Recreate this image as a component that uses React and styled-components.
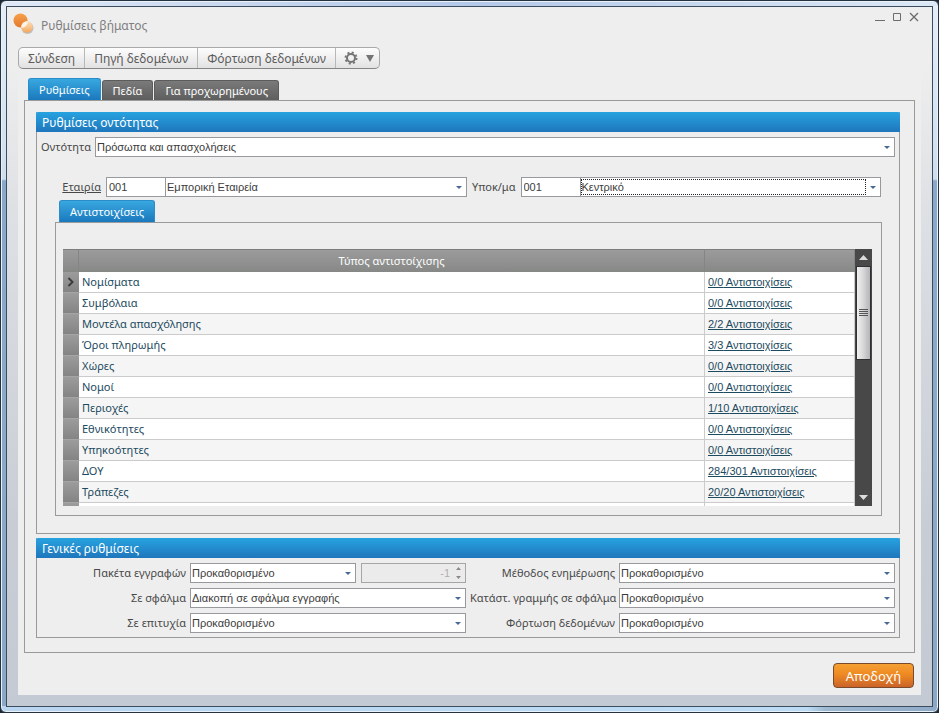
import React, { useState } from 'react';
import styled, { createGlobalStyle } from 'styled-components';

const GlobalStyle = createGlobalStyle`
    * {
        box-sizing: border-box;
    }
    body {
        margin: 0;
        background: #1c2836;
        font-family: "Noto Sans", "Open Sans", sans-serif;
        font-size: 11px;
        color: #484848;
    }
    button, input, select {
        font-family: inherit;
        color: inherit;
        margin: 0;
    }
`;

const fieldFont = '"Liberation Sans", Arial, sans-serif';

// Window frame
const Frame = styled.div`
    display: flex;
    min-height: 100vh;
    padding: 5px;
    border: 1px solid #26323f;
    border-radius: 6px;
    background:
        linear-gradient(90deg, #b9d5f0 0, #bcdcf5 86%, #9fb9d2 88%, #8fabc8 100%) bottom / 100% 6px no-repeat,
        linear-gradient(90deg, #dfe8f6, #b4c8e8 50%, #dce8f5) top / 100% 5px no-repeat,
        linear-gradient(#e4eef8 0, #cfdeee 178px, #8aa9ca 180px, #8ba8c6 100%);
    box-shadow: inset 0 0 0 1px #e8f2fa;
`;

const Window = styled.div`
    flex: 1;
    display: flex;
    flex-direction: column;
    padding: 0 11px 11px;
    border: 1px solid #3c4d60;
    background: linear-gradient(#eeeeee 60px, #dcdfe3 220px, #c8cdd5 520px, #c4cad3 100%);
`;

const TitleBar = styled.header`
    display: flex;
    align-items: flex-start;
    height: 40px;
    margin: 0 -2px 0 -5px;
`;

const Logo = styled.svg`
    margin-top: 6px;
    flex: none;
`;

const Title = styled.h1`
    flex: 1;
    margin: 8px 0 0 6px;
    font-size: 12px;
    line-height: 22px;
    font-weight: normal;
    color: #7e7e7e;
`;

const WindowButton = styled.button`
    display: flex;
    width: 17px;
    height: 20px;
    padding: 4px 3px;
    border: none;
    background: none;
`;

const Body = styled.main`
    flex: 1;
    padding: 0 6px 6px;
    background: #eeeeee;
`;

const Toolbar = styled.div`
    display: inline-flex;
    margin-left: -6px;
    border: 1px solid #a9a9a9;
    border-bottom-color: #858585;
    border-radius: 5px;
    background: linear-gradient(#fdfdfd, #e2e2e2);
    overflow: hidden;
`;

const ToolButton = styled.button`
    display: flex;
    align-items: center;
    gap: 8px;
    height: 20px;
    padding: 0 9px;
    border: none;
    background: none;
    font-size: 12px;
    white-space: nowrap;
    color: #5c5c5c;
    & + & {
        border-left: 1px solid #b8b8b8;
    }
    &:last-child {
        padding: 0 5px 0 8px;
    }
`;

const Tabs = styled.div`
    display: flex;
    align-items: flex-end;
    gap: 1px;
    padding-left: 4px;
`;

const MainTabs = styled(Tabs)`
    margin-top: 9px;
`;

const Tab = styled.button`
    height: ${(p) => (p.$active ? 22 : 20)}px;
    padding: 0 10px;
    border: 1px solid ${(p) => (p.$active ? '#2a8cc9' : '#5c5c5c')};
    border-bottom: none;
    border-radius: 3px 3px 0 0;
    background: ${(p) => (p.$active ? 'linear-gradient(#38a8e0, #1a78bd)' : 'linear-gradient(#7a7a7a, #5e5e5e)')};
    font-size: 11px;
    line-height: 20px;
    white-space: nowrap;
    color: #ffffff;
`;

const TabPanel = styled.div`
    padding: 11px 14px 14px 11px;
    border: 1px solid #9a9a9a;
`;

const Group = styled.section`
    border: 1px solid #9a9a9a;
    border-top: none;
    & + & {
        margin-top: 4px;
    }
`;

const GroupTitle = styled.h2`
    margin: 0 -1px;
    padding: 2px 6px 0;
    border-radius: 2px 2px 0 0;
    background: linear-gradient(#27a3e0, #1f76bc);
    font-size: 12px;
    line-height: 18px;
    font-weight: normal;
    color: #ffffff;
`;

const EntityRow = styled.div`
    display: grid;
    grid-template-columns: 50px 1fr;
    gap: 4px;
    padding: 5px 4px 0;
`;

const CompanyRow = styled.div`
    display: grid;
    grid-template-columns: 60px 1fr 44px 1fr;
    gap: 5px;
    padding: 20px 18px 0 4px;
`;

const SettingsGrid = styled.div`
    display: grid;
    grid-template-columns: 145px 1fr 145px 1fr;
    gap: 5px 4px;
    padding: 5px 4px 4px;
`;

const Label = styled.label`
    line-height: 20px;
    text-align: right;
    white-space: nowrap;
    text-decoration: ${(p) => (p.$link ? 'underline' : 'none')};
`;

const Pair = styled.div`
    display: grid;
    grid-template-columns: ${(p) => p.$columns};
    gap: ${(p) => p.$gap || 0}px;
`;

const TextBox = styled.input`
    width: 100%;
    height: 20px;
    padding: 0 2px;
    border: 1px solid #98999c;
    border-right: none;
    background: #ffffff;
    font-family: ${fieldFont};
    font-size: 11px;
    color: #3c3c3c;
`;

const SelectBox = styled.div`
    display: grid;
    grid-template-columns: 1fr 14px;
    align-items: center;
    height: 20px;
    border: 1px solid #98999c;
    background: #ffffff;
`;

const Select = styled.select`
    grid-area: 1 / 1 / 2 / 3;
    height: 18px;
    width: 100%;
    padding: 0 14px 0 1px;
    border: none;
    outline: none;
    appearance: none;
    background: none;
    font-family: ${fieldFont};
    font-size: 11px;
    color: #3c3c3c;
`;

const FocusMark = styled.span`
    grid-area: 1 / 1 / 2 / 2;
    height: 16px;
    border: 1px dotted #222222;
    pointer-events: none;
`;

const ArrowIcon = styled.svg`
    grid-area: 1 / 2 / 2 / 3;
    justify-self: center;
    pointer-events: none;
`;

const Spinner = styled.div`
    display: flex;
    align-items: center;
    height: 20px;
    padding-right: 4px;
    border: 1px solid #a6a6a6;
    background: #ebebeb;
`;

const SpinnerInput = styled.input`
    flex: 1;
    min-width: 0;
    padding: 0 6px 0 0;
    border: none;
    background: none;
    font-family: ${fieldFont};
    font-size: 11px;
    text-align: right;
    color: #b0b0b0;
`;

const MappingArea = styled.div`
    padding: 3px 17px 17px 18px;
`;

const MappingPanel = styled.div`
    display: flex;
    padding: 26px 9px 9px 7px;
    border: 1px solid #9a9a9a;
`;

const GridView = styled.div`
    flex: 1;
    height: 257px;
    overflow: hidden;
    background: #ffffff;
`;

const Table = styled.table`
    width: 100%;
    border-collapse: separate;
    border-spacing: 0;
    table-layout: fixed;
`;

const HeadCell = styled.th`
    width: ${(p) => p.$width || 'auto'};
    height: 23px;
    padding: 0 0 2px;
    border-top: 1px solid #7d7d7d;
    border-right: 1px solid #858585;
    background: linear-gradient(#9b9b9b, #868886);
    font-weight: normal;
    color: #ffffff;
`;

const MarkerCell = styled.td`
    height: 21px;
    padding: 0 4px;
    border-bottom: 1px solid #a5a5a5;
    background: linear-gradient(#9c9c9c, #848484);
    line-height: 0;
`;

const Row = styled.tr`
    background: ${(p) => (p.$shaded ? '#f5f5f5' : '#ffffff')};
`;

const Cell = styled.td`
    height: 21px;
    padding: 0 3px;
    border-right: 1px solid #cbcbcb;
    border-bottom: 1px solid #cbcbcb;
    line-height: 18px;
    white-space: nowrap;
    color: #1c4a5e;
`;

const MappingLink = styled.a`
    font-family: ${fieldFont};
    font-size: 11px;
    color: #1c4a5e;
`;

const ScrollBar = styled.div`
    display: flex;
    flex-direction: column;
    width: 17px;
    padding: 0 1px;
    background: #484848;
`;

const ScrollButton = styled.button`
    display: flex;
    align-items: center;
    justify-content: center;
    height: 17px;
    padding: 0;
    border: none;
    background: none;
`;

const ScrollTrack = styled.div`
    flex: 1;
`;

const ScrollThumb = styled.div`
    display: flex;
    align-items: center;
    justify-content: center;
    height: 94px;
    border: 1px solid #303030;
    background: linear-gradient(90deg, #f0f0f0, #d6d6d8 50%, #b4b4ba);
`;

const Footer = styled.footer`
    display: flex;
    justify-content: flex-end;
    padding: 10px 1px 0;
`;

const AcceptButton = styled.button`
    width: 81px;
    height: 25px;
    padding: 0;
    border: 1px solid #7a4a2c;
    border-radius: 4px;
    background: linear-gradient(#f5a032, #ee8a22 45%, #cb632a);
    font-size: 13px;
    color: #ffffff;
`;

const mappings = [
    ['Νομίσματα', '0/0'],
    ['Συμβόλαια', '0/0'],
    ['Μοντέλα απασχόλησης', '2/2'],
    ['Όροι πληρωμής', '3/3'],
    ['Χώρες', '0/0'],
    ['Νομοί', '0/0'],
    ['Περιοχές', '1/10'],
    ['Εθνικότητες', '0/0'],
    ['Υπηκοότητες', '0/0'],
    ['ΔΟΥ', '284/301'],
    ['Τράπεζες', '20/20'],
];

const ComboBox = ({ id, value, focused, ...rest }) => (
    <SelectBox>
        <Select id={id} defaultValue={value} {...rest}>
            <option>{value}</option>
        </Select>
        {focused && <FocusMark />}
        <ArrowIcon width="6" height="3" viewBox="0 0 6 3">
            <path d="M0 0h6L3 3z" fill="#49689a" />
        </ArrowIcon>
    </SelectBox>
);

const GearIcon = () => (
    <svg width="14" height="14" viewBox="0 0 14 14" fill="none" stroke="#747474">
        <circle cx="7" cy="7" r="4" strokeWidth="2" />
        <circle cx="7" cy="7" r="5.6" strokeWidth="1.8" strokeDasharray="2.1 2.298" />
    </svg>
);

const App = () => {
    const [tab, setTab] = useState('Ρυθμίσεις');

    return (
        <Frame>
            <GlobalStyle />
            <Window>
                <TitleBar>
                    <Logo width="22" height="22" viewBox="0 0 22 22">
                        <defs>
                            <linearGradient id="orange" x1="0" y1="0" x2="0" y2="1">
                                <stop offset="0" stopColor="#f6a04c" />
                                <stop offset="1" stopColor="#e37a2c" />
                            </linearGradient>
                            <linearGradient id="pale" x1="0" y1="0" x2="0" y2="1">
                                <stop offset="0" stopColor="#fbdcb4" />
                                <stop offset="0.5" stopColor="#f8c690" />
                                <stop offset="1" stopColor="#f3a65a" />
                            </linearGradient>
                        </defs>
                        <circle cx="14.5" cy="15" r="6" fill="#8d8d8d" opacity="0.5" />
                        <circle cx="7.500" cy="7.500" r="7" fill="url(#orange)" />
                        <circle cx="14" cy="14" r="5.8" fill="url(#pale)" />
                        <path d="M8.3 15C8 10.500 11 8.200 14.900 8.300 14.700 12 12 14.700 8.300 15z" fill="#fdf3e6" />
                    </Logo>
                    <Title>Ρυθμίσεις βήματος</Title>
                    <WindowButton aria-label="Ελαχιστοποίηση">
                        <svg width="11" height="11" stroke="#6c6c6c"><path d="M0 9.500h10" /></svg>
                    </WindowButton>
                    <WindowButton aria-label="Μεγιστοποίηση">
                        <svg width="11" height="11" stroke="#6c6c6c" fill="none"><path d="M1.500 2.500h7v7h-7z" /></svg>
                    </WindowButton>
                    <WindowButton aria-label="Κλείσιμο">
                        <svg width="11" height="11" stroke="#6c6c6c" strokeWidth="1.300"><path d="M1 2l8 8M9 2l-8 8" /></svg>
                    </WindowButton>
                </TitleBar>
                <Body>
                    <Toolbar>
                        <ToolButton>Σύνδεση</ToolButton>
                        <ToolButton>Πηγή δεδομένων</ToolButton>
                        <ToolButton>Φόρτωση δεδομένων</ToolButton>
                        <ToolButton aria-label="Επιλογές">
                            <GearIcon />
                            <svg width="8" height="7"><path d="M0 0h8L4 7z" fill="#747474" /></svg>
                        </ToolButton>
                    </Toolbar>
                    <MainTabs>
                        {['Ρυθμίσεις', 'Πεδία', 'Για προχωρημένους'].map((name) => (
                            <Tab key={name} $active={name === tab} onClick={() => setTab(name)}>
                                {name}
                            </Tab>
                        ))}
                    </MainTabs>
                    <TabPanel>
                        <Group>
                            <GroupTitle>Ρυθμίσεις οντότητας</GroupTitle>
                            <EntityRow>
                                <Label htmlFor="entity">Οντότητα</Label>
                                <ComboBox id="entity" value="Πρόσωπα και απασχολήσεις" />
                            </EntityRow>
                            <CompanyRow>
                                <Label htmlFor="company" $link>Εταιρία</Label>
                                <Pair $columns="59px 1fr">
                                    <TextBox id="company" defaultValue="001" />
                                    <ComboBox aria-label="Εταιρία" value="Εμπορική Εταιρεία" />
                                </Pair>
                                <Label htmlFor="branch">Υποκ/μα</Label>
                                <Pair $columns="59px 1fr">
                                    <TextBox id="branch" defaultValue="001" />
                                    <ComboBox aria-label="Υποκ/μα" value="Κεντρικό" focused />
                                </Pair>
                            </CompanyRow>
                            <MappingArea>
                                <Tabs>
                                    <Tab $active>Αντιστοιχίσεις</Tab>
                                </Tabs>
                                <MappingPanel>
                                    <GridView>
                                        <Table>
                                            <thead>
                                                <tr>
                                                    <HeadCell $width="16px" />
                                                    <HeadCell>Τύπος αντιστοίχισης</HeadCell>
                                                    <HeadCell $width="150px" />
                                                </tr>
                                            </thead>
                                            <tbody>
                                                {mappings.map(([name, count], i) => (
                                                    <Row key={name} $shaded={i % 2 === 0 && i > 0}>
                                                        <MarkerCell>
                                                            {i === 0 && (
                                                                <svg width="8" height="10" fill="none" stroke="#3c3c3c" strokeWidth="2">
                                                                    <path d="M1.500 1l4 4-4 4" />
                                                                </svg>
                                                            )}
                                                        </MarkerCell>
                                                        <Cell>{name}</Cell>
                                                        <Cell>
                                                            <MappingLink href="#">{count} Αντιστοιχίσεις</MappingLink>
                                                        </Cell>
                                                    </Row>
                                                ))}
                                                <Row>
                                                    <MarkerCell />
                                                    <Cell />
                                                    <Cell />
                                                </Row>
                                            </tbody>
                                        </Table>
                                    </GridView>
                                    <ScrollBar>
                                        <ScrollButton aria-label="Πάνω">
                                            <svg width="9" height="5"><path d="M0 5h9L4.500 0z" fill="#dddddd" /></svg>
                                        </ScrollButton>
                                        <ScrollTrack>
                                            <ScrollThumb>
                                                <svg width="9" height="8" stroke="#555555">
                                                    <path d="M0 .5h9M0 2.500h9M0 4.500h9M0 6.500h9" />
                                                </svg>
                                            </ScrollThumb>
                                        </ScrollTrack>
                                        <ScrollButton aria-label="Κάτω">
                                            <svg width="9" height="5"><path d="M0 0h9L4.500 5z" fill="#dddddd" /></svg>
                                        </ScrollButton>
                                    </ScrollBar>
                                </MappingPanel>
                            </MappingArea>
                        </Group>
                        <Group>
                            <GroupTitle>Γενικές ρυθμίσεις</GroupTitle>
                            <SettingsGrid>
                                <Label htmlFor="packets">Πακέτα εγγραφών</Label>
                                <Pair $columns="1fr 105px" $gap={5}>
                                    <ComboBox id="packets" value="Προκαθορισμένο" />
                                    <Spinner>
                                        <SpinnerInput aria-label="Πλήθος εγγραφών" value="-1" disabled />
                                        <svg width="5" height="12" fill="#8a8a8a">
                                            <path d="M0 3h5L2.500 0zM0 9h5l-2.500 3z" />
                                        </svg>
                                    </Spinner>
                                </Pair>
                                <Label htmlFor="method">Μέθοδος ενημέρωσης</Label>
                                <ComboBox id="method" value="Προκαθορισμένο" />
                                <Label htmlFor="onError">Σε σφάλμα</Label>
                                <ComboBox id="onError" value="Διακοπή σε σφάλμα εγγραφής" />
                                <Label htmlFor="lineState">Κατάστ. γραμμής σε σφάλμα</Label>
                                <ComboBox id="lineState" value="Προκαθορισμένο" />
                                <Label htmlFor="onSuccess">Σε επιτυχία</Label>
                                <ComboBox id="onSuccess" value="Προκαθορισμένο" />
                                <Label htmlFor="loading">Φόρτωση δεδομένων</Label>
                                <ComboBox id="loading" value="Προκαθορισμένο" />
                            </SettingsGrid>
                        </Group>
                    </TabPanel>
                    <Footer>
                        <AcceptButton>Αποδοχή</AcceptButton>
                    </Footer>
                </Body>
            </Window>
        </Frame>
    );
};

export default App;
